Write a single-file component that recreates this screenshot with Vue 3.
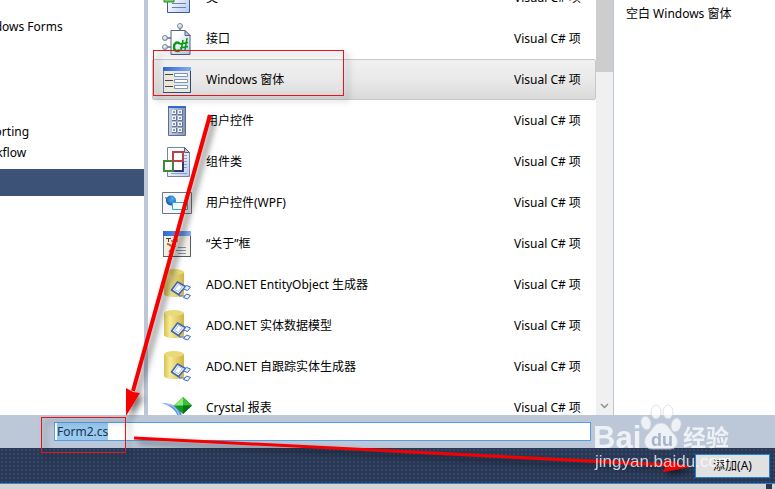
<script setup>
import { onMounted, ref } from 'vue'

const templates = [
  { icon: 'class', name: '类' },
  { icon: 'interface', name: '接口' },
  { icon: 'form', name: 'Windows 窗体' },
  { icon: 'control', name: '用户控件' },
  { icon: 'component', name: '组件类' },
  { icon: 'wpf', name: '用户控件(WPF)' },
  { icon: 'about', name: '“关于”框' },
  { icon: 'data', name: 'ADO.NET EntityObject 生成器' },
  { icon: 'data', name: 'ADO.NET 实体数据模型' },
  { icon: 'data', name: 'ADO.NET 自跟踪实体生成器' },
  { icon: 'crystal', name: 'Crystal 报表' },
]
const selected = ref(2)
const fileName = ref('Form2.cs')
const nameInput = ref(null)

onMounted(() => {
  nameInput.value.focus()
  nameInput.value.select()
})
</script>

<template>
  <div class="dialog">
    <svg class="defs" aria-hidden="true">
      <defs>
        <linearGradient id="paper" x1="0" y1="0" x2="1" y2="1">
          <stop offset="0.3" stop-color="#fff" />
          <stop offset="1" stop-color="#b4c9f0" />
        </linearGradient>
        <linearGradient id="title" x1="0" x2="1">
          <stop offset="0" stop-color="#2f66d0" />
          <stop offset="1" stop-color="#86adf0" />
        </linearGradient>
        <linearGradient id="gold" x1="0" x2="1">
          <stop offset="0" stop-color="#d9c34e" />
          <stop offset="0.3" stop-color="#f5ea98" />
          <stop offset="1" stop-color="#cfb440" />
        </linearGradient>
        <linearGradient id="steel" x1="0" x2="1">
          <stop offset="0" stop-color="#c3cfe4" />
          <stop offset="1" stop-color="#8494b2" />
        </linearGradient>
        <radialGradient id="ball" cx="0.4" cy="0.35" r="0.7">
          <stop offset="0" stop-color="#fff" />
          <stop offset="1" stop-color="#a5b1c4" />
        </radialGradient>
        <radialGradient id="blob" cx="0.65" cy="0.3" r="0.8">
          <stop offset="0" stop-color="#4fb0f2" />
          <stop offset="1" stop-color="#0e3f9c" />
        </radialGradient>
      </defs>
    </svg>

    <main class="panes">
      <nav class="tree">
        <ul>
          <li><a href="#">Windows Forms</a></li>
          <li class="gap"></li>
          <li><a href="#">Reporting</a></li>
          <li><a href="#">Workflow</a></li>
        </ul>
        <div class="tree-selected"></div>
      </nav>

      <section class="list">
        <ul>
          <li v-for="(t, i) in templates" :key="i">
            <button class="row" :class="{ active: i === selected }" type="button" @click="selected = i">
              <svg class="icon" viewBox="0 0 32 32" aria-hidden="true">
                <g v-if="t.icon === 'class'">
                  <path d="M6.5 1.500h17l5 5v24h-22z" fill="url(#paper)" stroke="#3d5c96" />
                  <path d="M3 12h10v8H3z" fill="#79cf61" stroke="#2d8a25" />
                  <path d="M11 21.500h14M11 25.500h14" stroke="#6784b8" />
                </g>
                <g v-else-if="t.icon === 'interface'">
                  <path d="M19 5v4M6 15h5M6 24h5" stroke="#5f6f8e" stroke-width="1.500" />
                  <path d="M10 7.500h14l5 5v19H10z" fill="url(#paper)" stroke="#52627f" />
                  <path d="M24 7.500v5h5z" fill="#c2cde0" stroke="#52627f" />
                  <g fill="url(#ball)" stroke="#7d899f">
                    <circle cx="19" cy="3" r="2.500" /><circle cx="4" cy="15" r="2.500" /><circle cx="4" cy="24" r="2.500" />
                  </g>
                  <path d="M19 21c-3-3-6-1-6 3s3 5 6 3" fill="none" stroke="#079a0c" stroke-width="2.400" />
                  <path d="M22 17l-2 11M26 15l-2 12M19 21l8-1.500M19 25l8-1.500" stroke="#079a0c" stroke-width="1.500" />
                </g>
                <g v-else-if="t.icon === 'form'">
                  <path d="M2.500 3.500h27v25h-27z" fill="#ece9d8" stroke="#5f7aa5" />
                  <path d="M2 3h28v4H2z" fill="url(#title)" />
                  <path d="M29.500 7v21.500H2" fill="none" stroke="#284b88" />
                  <path d="M4 10.500h8M4 16.500h8M4 22.500h8" stroke="#404754" />
                  <path d="M13.500 9.500h13v3h-13zM13.500 15.500h13v3h-13zM13.500 21.500h13v3h-13z" fill="#fff" stroke="#7796c9" />
                </g>
                <g v-else-if="t.icon === 'control'">
                  <path d="M7.500 1.500h17v29h-17z" fill="url(#steel)" stroke="#5c6d8e" />
                  <path d="M7 1h18v2H7z" fill="#316ad0" />
                  <path d="M11 5h4v4h-4zM17 5h4v4h-4zM11 11h4v4h-4zM17 11h4v4h-4zM11 17h4v4h-4zM17 17h4v4h-4zM11 23h4v4h-4zM17 23h4v4h-4z" fill="#eef1f7" />
                  <path d="M11 9.500h4.500V5M17 9.500h4.500V5M11 15.500h4.500V11M17 15.500h4.500V11M11 21.500h4.500V17M17 21.500h4.500V17M11 27.500h4.500V23M17 27.500h4.500V23" fill="none" stroke="#66758f" />
                  <path d="M12 6h2v2h-2zM18 6h2v2h-2zM12 12h2v2h-2zM18 12h2v2h-2zM12 18h2v2h-2zM18 18h2v2h-2zM12 24h2v2h-2zM18 24h2v2h-2z" fill="#8e9aae" />
                </g>
                <g v-else-if="t.icon === 'component'">
                  <path d="M6.500 1.500h17l5 5v24h-22z" fill="url(#paper)" stroke="#7484a2" />
                  <path d="M23.500 1.500v5h5z" fill="#c2cde0" stroke="#52627f" />
                  <path d="M22 9.500h4M23 12.500h3M23 15.500h3M23 18.500h3M23 21.500h3M10 27.500h16" stroke="#8b9dc0" />
                  <path d="M12 15h10v10H12z" fill="#fff" stroke="#35357c" stroke-width="2" />
                  <path d="M3 15h9v10H3z" fill="#fff" stroke="#3f8a36" stroke-width="2" />
                  <path d="M12 6h10v9H12z" fill="#fff" stroke="#bb4048" stroke-width="2" />
                </g>
                <g v-else-if="t.icon === 'wpf'">
                  <path d="M1.500 5.500h29v21h-29z" fill="#f7f8fa" stroke="#6d7682" />
                  <circle cx="10" cy="13.500" r="5" fill="url(#blob)" />
                  <path d="M4 10c4 1 6 4 10 5v4c-5 0-8-4-10-9z" fill="url(#blob)" />
                  <path d="M11.500 15.500h15v7h-15z" fill="#f6fbff" stroke="#28aecb" />
                </g>
                <g v-else-if="t.icon === 'about'">
                  <path d="M2.500 3.500h27v25h-27z" fill="#f3efe4" stroke="#5f7aa5" />
                  <path d="M2 3h28v5H2z" fill="url(#title)" />
                  <path d="M29.500 8v20.500H2" fill="none" stroke="#555a66" />
                  <path d="M5 10.500h5M7.500 11v3M11 12v2M13 11v3M16 11v3" stroke="#4c4038" />
                  <path d="M6 16c4 0 3 3 7 3l-5 5" fill="none" stroke="#c95a1e" stroke-width="2" />
                  <path d="M17 19.500h8M15 22.500h10M17 25.500h8" stroke="#7f90c8" />
                </g>
                <g v-else-if="t.icon === 'data'">
                  <path d="M3 3v22c0 4 20 4 20 0V3z" fill="url(#gold)" />
                  <ellipse cx="13" cy="3" rx="10" ry="3" fill="#e9d97a" />
                  <path d="M20 20l4-2M18 22v5h6" fill="none" stroke="#3e65b4" />
                  <path d="M10.500 21l6-8 8 4.500-7 8z" fill="#f4f8ff" stroke="#3e65b4" stroke-width="1.500" stroke-linejoin="round" />
                  <path d="M13.500 20.500l4-5 4 2-4 5z" fill="#fff" stroke="#a5bde6" />
                  <path d="M22.500 20l3-3.500 4 1.500-3 3.500zM22.500 28.500l3-3.500 4 1.500-3 3.500z" fill="#e8f1ff" stroke="#3e65b4" stroke-linejoin="round" />
                </g>
                <g v-else>
                  <path d="M0 11c10 0 16 3 20 8l2 13h-4C18 20 11 14 0 11z" fill="#5d92dc" />
                  <path d="M5 12c8 1 13 6 15 18" fill="none" stroke="#bdd6f7" />
                  <path d="M22 5l9 8.500-9 8.500-9-8.500z" fill="#0e9a1b" />
                  <path d="M22 5v8.500l-9 0z" fill="#8be878" />
                  <path d="M22 5v8.500h9z" fill="#37c137" />
                  <path d="M22 22v-8.500h9z" fill="#07741a" />
                </g>
              </svg>
              <span class="name">{{ t.name }}</span>
              <span class="kind">Visual C# 项</span>
            </button>
          </li>
        </ul>
      </section>

      <div class="scroll">
        <div class="thumb"></div>
        <svg class="chevron" viewBox="0 0 9 6" aria-hidden="true">
          <path d="M1 1l3.500 3.500L8 1" fill="none" stroke="#8b8b8b" stroke-width="1.400" />
        </svg>
      </div>

      <aside class="details">空白 Windows 窗体</aside>
    </main>

    <div class="name-bar">
      <input ref="nameInput" v-model="fileName" type="text" aria-label="名称" spellcheck="false" />
    </div>

    <footer class="actions">
      <button class="add" type="button">添加(A)</button>
    </footer>
    <div class="edge"><div class="edge-mark"></div></div>

    <svg class="overlay" viewBox="0 0 775 489" aria-hidden="true">
      <defs>
        <filter id="shade" filterUnits="userSpaceOnUse" x="0" y="0" width="775" height="489">
          <feDropShadow dx="4" dy="4" stdDeviation="3" flood-color="#000" flood-opacity="0.550" />
        </filter>
      </defs>
      <g filter="url(#shade)">
        <rect x="153.500" y="50.500" width="190" height="45" fill="none" stroke="#e3191c" />
        <rect x="41.500" y="417.500" width="84" height="35" fill="none" stroke="#e3191c" />
        <path d="M210 115L133 391" stroke="#f50000" stroke-width="4" />
        <path d="M126 416l0-28 7 4 7 1z" fill="#f50000" />
        <path d="M134 438L670 465" stroke="#f50000" stroke-width="3" />
        <path d="M690 467l-27 5 3-6-2-7z" fill="#f50000" />
      </g>
      <g class="mark">
        <text x="593" y="448" class="mark-latin">Bai</text>
        <g class="paw">
          <ellipse cx="656" cy="412" rx="5" ry="7" />
          <ellipse cx="668" cy="412" rx="5" ry="7" />
          <ellipse cx="646" cy="423" rx="5" ry="7" transform="rotate(-15 646 423)" />
          <ellipse cx="676" cy="425" rx="5" ry="7" transform="rotate(15 676 425)" />
          <path d="M661 423c7 0 8 6 13 11 6 6 4 15-4 15h-18c-8 0-10-9-4-15 5-5 6-11 13-11z" />
        </g>
        <text x="651" y="446" class="mark-du">du</text>
        <text x="683" y="446" class="mark-cjk">经验</text>
        <text x="595" y="467" class="mark-url">jingyan.baidu.com</text>
      </g>
    </svg>
  </div>
</template>

<style>
body {
  margin: 0;
}
</style>

<style scoped>
.dialog {
  position: relative;
  display: flex;
  flex-direction: column;
  height: 100vh;
  overflow: hidden;
  font: 12px/20px "Noto Sans", "Noto Sans CJK SC", sans-serif;
  color: #000;
  background: #fff;
}
.defs {
  position: absolute;
  width: 0;
  height: 0;
}
ul {
  list-style: none;
  margin: 0;
  padding: 0;
}
.panes {
  flex: 1;
  min-height: 0;
  display: grid;
  grid-template-columns: 144px minmax(0, 1fr) 17px 162px;
  grid-template-rows: minmax(0, 1fr);
}
.tree {
  overflow: hidden;
  padding-top: 17px;
}
.tree ul {
  margin-left: -27px;
}
.tree li {
  height: 21px;
}
.tree .gap {
  height: 84px;
}
.tree a {
  color: inherit;
  text-decoration: none;
}
.tree-selected {
  height: 27px;
  margin-top: 5px;
  background: #3d5277;
}
.list {
  overflow: hidden;
  border-left: 4px solid #bcc7d8;
  padding-left: 4px;
}
.list ul {
  margin-top: -23px;
}
.row {
  display: flex;
  align-items: center;
  gap: 13px;
  width: 100%;
  height: 41px;
  padding: 0 10px 0 8px;
  border: 1px solid transparent;
  border-radius: 2px;
  background: none;
  color: inherit;
  font: inherit;
  text-align: left;
}
.row.active {
  border-color: #c8c8c8;
  background: linear-gradient(#f1f1f1, #e9e9e9 50%, #dadada);
}
.icon {
  flex: none;
  width: 32px;
  height: 32px;
}
.name {
  flex: 1;
}
.kind {
  flex: none;
  width: 71px;
}
.scroll {
  display: flex;
  flex-direction: column;
  justify-content: space-between;
  align-items: center;
  background: #f0f0f0;
}
.thumb {
  width: 100%;
  height: 72px;
  background: #cdcdcd;
}
.chevron {
  width: 9px;
  height: 6px;
  margin-bottom: 6px;
}
.details {
  border-left: 1px solid #bcc7d8;
  padding: 4px 12px;
}
.name-bar {
  padding: 7px 184px 7px 54px;
  background: #bcc7d8;
}
.name-bar input {
  display: block;
  box-sizing: border-box;
  width: 100%;
  height: 19px;
  padding: 0 2px;
  border: 1px solid #569de5;
  outline: none;
  background: #fff;
  color: #1e1e1e;
  font: 12px/16px "Noto Sans", sans-serif;
}
.name-bar input::selection {
  background: #99c9ef;
  color: #1b3350;
}
.actions {
  display: flex;
  justify-content: flex-end;
  padding: 6px 5px 5px;
  background: radial-gradient(circle, #34466a 1px, transparent 1px) 0 0 / 4px 4px, #293955;
}
.add {
  width: 75px;
  height: 24px;
  padding: 0;
  border: 1px solid #1883d7;
  background: #e1e1e1;
  color: #000;
  font: inherit;
}
.edge {
  display: flex;
  justify-content: flex-end;
  height: 5px;
  padding-right: 3px;
  border-top: 1px solid #3186cf;
  background: #d6d6d6;
}
.edge-mark {
  width: 6px;
  background: #293955;
}
.overlay {
  position: absolute;
  top: 0;
  left: 0;
  width: 775px;
  height: 489px;
  pointer-events: none;
}
.mark {
  fill: #fff;
  opacity: 0.75;
}
.paw {
  stroke: #d3d6dc;
}
.mark-latin {
  font: bold 31px "Liberation Sans", sans-serif;
}
.mark-du {
  font: bold 18px "Liberation Sans", sans-serif;
  fill: #9fadc4;
}
.mark-cjk {
  font: bold 23px "Noto Sans CJK SC", sans-serif;
}
.mark-url {
  font: 17px "Liberation Sans", sans-serif;
}
</style>
